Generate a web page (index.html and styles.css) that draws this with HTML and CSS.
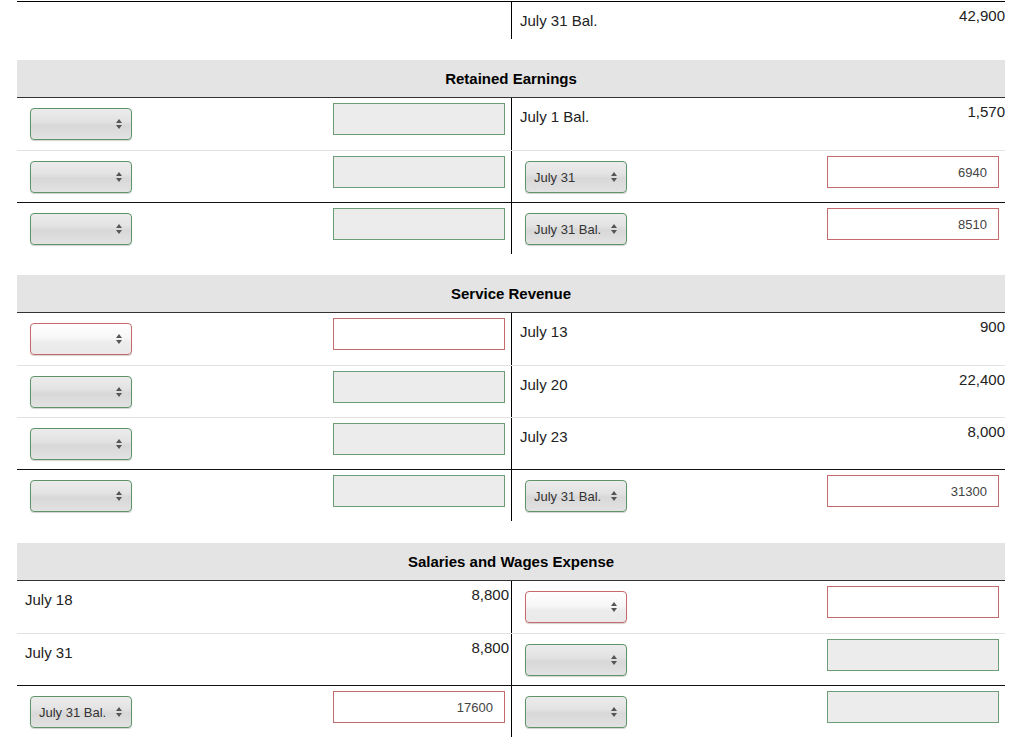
FILE: index.html
```html
<!DOCTYPE html>
<html lang="en">
<head>
<meta charset="utf-8">
<title>T-Accounts</title>
<link rel="stylesheet" href="styles.css">
</head>
<body>
<div class="ledger">

  <section class="account">
    <div class="row first">
      <div class="cell l text"></div>
      <div class="cell r text"><span class="lbl">July 31 Bal.</span><span class="val">42,900</span></div>
    </div>
  </section>

  <section class="account">
    <div class="acct-head">Retained Earnings</div>
    <div class="row">
      <div class="cell l entry">
        <div class="pick ok"><span class="pick-text"></span><svg class="arr" viewBox="0 0 6 10" width="6" height="10"><path d="M3 0L6 4H0zM0 6H6L3 10z"/></svg></div>
        <input class="amt ok" type="text" value="" readonly>
      </div>
      <div class="cell r text"><span class="lbl">July 1 Bal.</span><span class="val">1,570</span></div>
    </div>
    <div class="row">
      <div class="cell l entry">
        <div class="pick ok"><span class="pick-text"></span><svg class="arr" viewBox="0 0 6 10" width="6" height="10"><path d="M3 0L6 4H0zM0 6H6L3 10z"/></svg></div>
        <input class="amt ok" type="text" value="" readonly>
      </div>
      <div class="cell r entry">
        <div class="pick ok"><span class="pick-text">July 31</span><svg class="arr" viewBox="0 0 6 10" width="6" height="10"><path d="M3 0L6 4H0zM0 6H6L3 10z"/></svg></div>
        <input class="amt bad" type="text" value="6940" readonly>
      </div>
    </div>
    <div class="row total">
      <div class="cell l entry">
        <div class="pick ok"><span class="pick-text"></span><svg class="arr" viewBox="0 0 6 10" width="6" height="10"><path d="M3 0L6 4H0zM0 6H6L3 10z"/></svg></div>
        <input class="amt ok" type="text" value="" readonly>
      </div>
      <div class="cell r entry">
        <div class="pick ok"><span class="pick-text">July 31 Bal.</span><svg class="arr" viewBox="0 0 6 10" width="6" height="10"><path d="M3 0L6 4H0zM0 6H6L3 10z"/></svg></div>
        <input class="amt bad" type="text" value="8510" readonly>
      </div>
    </div>
  </section>

  <section class="account">
    <div class="acct-head">Service Revenue</div>
    <div class="row">
      <div class="cell l entry">
        <div class="pick bad"><span class="pick-text"></span><svg class="arr" viewBox="0 0 6 10" width="6" height="10"><path d="M3 0L6 4H0zM0 6H6L3 10z"/></svg></div>
        <input class="amt bad" type="text" value="" readonly>
      </div>
      <div class="cell r text"><span class="lbl">July 13</span><span class="val">900</span></div>
    </div>
    <div class="row">
      <div class="cell l entry">
        <div class="pick ok"><span class="pick-text"></span><svg class="arr" viewBox="0 0 6 10" width="6" height="10"><path d="M3 0L6 4H0zM0 6H6L3 10z"/></svg></div>
        <input class="amt ok" type="text" value="" readonly>
      </div>
      <div class="cell r text"><span class="lbl">July 20</span><span class="val">22,400</span></div>
    </div>
    <div class="row">
      <div class="cell l entry">
        <div class="pick ok"><span class="pick-text"></span><svg class="arr" viewBox="0 0 6 10" width="6" height="10"><path d="M3 0L6 4H0zM0 6H6L3 10z"/></svg></div>
        <input class="amt ok" type="text" value="" readonly>
      </div>
      <div class="cell r text"><span class="lbl">July 23</span><span class="val">8,000</span></div>
    </div>
    <div class="row total">
      <div class="cell l entry">
        <div class="pick ok"><span class="pick-text"></span><svg class="arr" viewBox="0 0 6 10" width="6" height="10"><path d="M3 0L6 4H0zM0 6H6L3 10z"/></svg></div>
        <input class="amt ok" type="text" value="" readonly>
      </div>
      <div class="cell r entry">
        <div class="pick ok"><span class="pick-text">July 31 Bal.</span><svg class="arr" viewBox="0 0 6 10" width="6" height="10"><path d="M3 0L6 4H0zM0 6H6L3 10z"/></svg></div>
        <input class="amt bad" type="text" value="31300" readonly>
      </div>
    </div>
  </section>

  <section class="account">
    <div class="acct-head">Salaries and Wages Expense</div>
    <div class="row">
      <div class="cell l text"><span class="lbl">July 18</span><span class="val">8,800</span></div>
      <div class="cell r entry">
        <div class="pick bad"><span class="pick-text"></span><svg class="arr" viewBox="0 0 6 10" width="6" height="10"><path d="M3 0L6 4H0zM0 6H6L3 10z"/></svg></div>
        <input class="amt bad" type="text" value="" readonly>
      </div>
    </div>
    <div class="row">
      <div class="cell l text"><span class="lbl">July 31</span><span class="val">8,800</span></div>
      <div class="cell r entry">
        <div class="pick ok"><span class="pick-text"></span><svg class="arr" viewBox="0 0 6 10" width="6" height="10"><path d="M3 0L6 4H0zM0 6H6L3 10z"/></svg></div>
        <input class="amt ok" type="text" value="" readonly>
      </div>
    </div>
    <div class="row total">
      <div class="cell l entry">
        <div class="pick ok"><span class="pick-text">July 31 Bal.</span><svg class="arr" viewBox="0 0 6 10" width="6" height="10"><path d="M3 0L6 4H0zM0 6H6L3 10z"/></svg></div>
        <input class="amt bad" type="text" value="17600" readonly>
      </div>
      <div class="cell r entry">
        <div class="pick ok"><span class="pick-text"></span><svg class="arr" viewBox="0 0 6 10" width="6" height="10"><path d="M3 0L6 4H0zM0 6H6L3 10z"/></svg></div>
        <input class="amt ok" type="text" value="" readonly>
      </div>
    </div>
  </section>

</div>
</body>
</html>
```

FILE: styles.css
```css
html, body {
  margin: 0;
  padding: 0;
  background: #fff;
}

body {
  font-family: "Liberation Sans", Arial, Helvetica, sans-serif;
  color: #222;
}

.ledger {
  width: 988px;
  margin: 1px 0 0 17px;
}

.account + .account {
  margin-top: 21px;
}

.account:last-child {
  margin-top: 22px;
}

.acct-head {
  height: 38px;
  box-sizing: border-box;
  background: #e4e4e4;
  border-bottom: 1px solid #333;
  display: flex;
  align-items: center;
  justify-content: center;
  font-size: 15px;
  font-weight: bold;
  color: #000;
}

.row {
  display: grid;
  grid-template-columns: 495px 493px;
  height: 52px;
  box-sizing: border-box;
}

.row + .row {
  border-top: 1px solid #e2e2e2;
}

.row.total {
  border-top-color: #111;
}

.row.first {
  height: 38px;
  border-top: 1px solid #000;
}

.cell {
  box-sizing: border-box;
  display: flex;
  justify-content: space-between;
  align-items: flex-start;
  min-width: 0;
}

.cell.l {
  border-right: 1px solid #000;
}

.cell.entry {
  padding: 5px 6px 0 13px;
}

.cell.text {
  padding: 0 2px 0 8px;
}

.cell.r.text {
  padding-right: 0;
}

.lbl {
  margin-top: 10px;
  font-size: 15px;
  line-height: 18px;
  color: #222;
}

.val {
  margin-top: 5px;
  font-size: 15px;
  line-height: 18px;
  color: #222;
}

/* select-like dropdown */
.pick {
  margin-top: 5px;
  width: 102px;
  height: 32px;
  box-sizing: border-box;
  border-radius: 4px;
  border: 1px solid #5e946a;
  display: flex;
  align-items: center;
  justify-content: space-between;
  padding: 0 8px 0 8px;
  font-size: 13px;
  color: #333;
  background: linear-gradient(to bottom, #ececec 0%, #e3e3e3 40%, #d8d8d8 55%, #e2e2e2 100%);
  box-shadow: 0 1px 1px rgba(0, 0, 0, 0.18);
}

.pick.bad {
  border-color: #c66a6c;
  background: linear-gradient(to bottom, #ffffff 0%, #f7f7f7 45%, #ededed 60%, #e9e9e9 100%);
}

.pick-text {
  white-space: nowrap;
}

.arr {
  flex: none;
  fill: #555;
  margin-right: 1px;
}

/* amount inputs */
.amt {
  width: 172px;
  height: 32px;
  box-sizing: border-box;
  margin: 0;
  padding: 0 11px 0 6px;
  border: 1px solid #6c9d76;
  border-radius: 0;
  background: #ececec;
  font-family: "Liberation Sans", Arial, Helvetica, sans-serif;
  font-size: 13px;
  color: #444;
  text-align: right;
  outline: none;
}

.amt.bad {
  background: #fff;
  border-color: #c46b6d;
}
```
